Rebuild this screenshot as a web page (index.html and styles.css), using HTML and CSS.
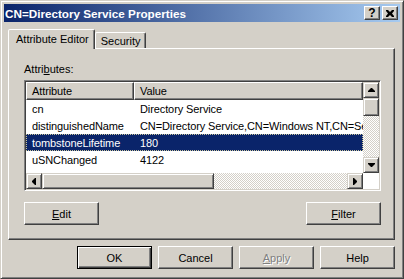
FILE: index.html
```html
<!DOCTYPE html>
<html lang="en">
<head>
    <meta charset="UTF-8">
    <title>CN=Directory Service Properties</title>
    <link rel="stylesheet" href="styles.css">
</head>
<body>
<div class="window">
    <div class="titlebar">
        <span class="title">CN=Directory Service Properties</span>
        <div class="caption-btns">
            <span class="cbtn help">?</span>
            <span class="cbtn close">
                <svg width="8" height="7" viewBox="0 0 8 7"><path d="M0 0h2l2 2 2-2h2v1L6 3.5 8 6v1H6L4 5 2 7H0V6l2-2.5L0 1z" fill="#000"/></svg>
            </span>
        </div>
    </div>

    <div class="dialog">
        <div class="tabs">
            <div class="tab active">Attribute Editor</div>
            <div class="tab">Security</div>
        </div>

        <div class="panel">
            <div class="label">Attri<u>b</u>utes:</div>

            <div class="listbox">
                <div class="list-content">
                    <div class="lv-header">
                        <div class="hcell col-a">Attribute</div>
                        <div class="hcell col-v">Value</div>
                    </div>
                    <div class="row">
                        <div class="cell col-a">cn</div>
                        <div class="cell col-v">Directory Service</div>
                    </div>
                    <div class="row">
                        <div class="cell col-a">distinguishedName</div>
                        <div class="cell col-v">CN=Directory Service,CN=Windows NT,CN=Services,CN=Configuration</div>
                    </div>
                    <div class="row selected">
                        <div class="cell col-a">tombstoneLifetime</div>
                        <div class="cell col-v">180</div>
                    </div>
                    <div class="row">
                        <div class="cell col-a">uSNChanged</div>
                        <div class="cell col-v">4122</div>
                    </div>
                    <div class="row">
                        <div class="cell col-a">uSNCreated</div>
                        <div class="cell col-v">4122</div>
                    </div>
                </div>

                <div class="vscroll">
                    <div class="sbtn">
                        <svg width="7" height="4" viewBox="0 0 7 4"><path d="M3 0h1l3 3v1H0V3z" fill="#000"/></svg>
                    </div>
                    <div class="thumb v"></div>
                    <div class="track"></div>
                    <div class="sbtn">
                        <svg width="7" height="4" viewBox="0 0 7 4"><path d="M0 0h7v1L4 4H3L0 1z" fill="#000"/></svg>
                    </div>
                </div>

                <div class="hscroll">
                    <div class="sbtn">
                        <svg width="4" height="7" viewBox="0 0 4 7"><path d="M0 3v1l3 3h1V0H3z" fill="#000"/></svg>
                    </div>
                    <div class="thumb h"></div>
                    <div class="track"></div>
                    <div class="sbtn">
                        <svg width="4" height="7" viewBox="0 0 4 7"><path d="M0 0v7h1l3-3V3L1 0z" fill="#000"/></svg>
                    </div>
                </div>
                <div class="corner"></div>
            </div>

            <div class="panel-buttons">
                <button class="btn"><u>E</u>dit</button>
                <button class="btn"><u>F</u>ilter</button>
            </div>
        </div>

        <div class="dialog-buttons">
            <button class="btn default">OK</button>
            <button class="btn">Cancel</button>
            <button class="btn disabled"><u>A</u>pply</button>
            <button class="btn">Help</button>
        </div>
    </div>
</div>
</body>
</html>
```

FILE: styles.css
```css
body {
    margin: 0;
    background-color: #d4d0c8;
    font-family: "Liberation Sans", Arial, sans-serif;
    font-size: 11px;
    color: #000;
}

/* window frame */
.window {
    box-sizing: border-box;
    width: 404px;
    height: 279px;
    padding: 3px;
    background-color: #d4d0c8;
    border: 1px solid;
    border-color: #d4d0c8 #404040 #404040 #d4d0c8;
    box-shadow: inset 1px 1px #fff, inset -1px -1px #808080;
}

.titlebar {
    height: 18px;
    display: flex;
    align-items: center;
    justify-content: space-between;
    padding: 0 2px 0 1px;
    background: linear-gradient(to right, #0a246a, #a6caf0);
}
.title {
    color: #fff;
    font-weight: bold;
    font-size: 11.7px;
    white-space: nowrap;
}
.caption-btns {
    display: flex;
    gap: 2px;
}
.cbtn {
    box-sizing: border-box;
    width: 16px;
    height: 14px;
    display: flex;
    align-items: center;
    justify-content: center;
    background-color: #d4d0c8;
    border: 1px solid;
    border-color: #fff #404040 #404040 #fff;
    box-shadow: inset -1px -1px #808080, inset 1px 1px #d4d0c8;
}
.cbtn.help {
    font-weight: bold;
    font-size: 12px;
    line-height: 1;
}

/* dialog body */
.dialog {
    padding: 7px 5px 0 4px;
}

.tabs {
    display: flex;
    align-items: flex-end;
    height: 19px;
}
.tab {
    box-sizing: border-box;
    height: 16px;
    padding: 0 4px 0 5px;
    display: flex;
    align-items: center;
    border: 1px solid;
    border-bottom: none;
    border-color: #fff #404040 transparent #fff;
    border-radius: 2px 2px 0 0;
    box-shadow: inset -1px 0 #808080;
}
.tab.active {
    position: relative;
    z-index: 1;
    height: 20px;
    margin-bottom: -1px;
    padding: 0 5px 2px 7px;
    background-color: #d4d0c8;
}

.panel {
    box-sizing: border-box;
    height: 192px;
    padding: 14px 13px 0 15px;
    border: 1px solid;
    border-color: #fff #404040 #404040 #fff;
    box-shadow: inset -1px -1px #808080;
}
.label {
    line-height: 13px;
}

/* list view */
.listbox {
    box-sizing: border-box;
    height: 111px;
    margin-top: 4px;
    display: grid;
    grid-template-columns: 1fr 16px;
    grid-template-rows: 1fr 16px;
    background-color: #fff;
    border: 1px solid;
    border-color: #808080 #fff #fff #808080;
    box-shadow: inset 1px 1px #404040, inset -1px -1px #d4d0c8;
    padding: 1px;
}
.list-content {
    overflow: hidden;
    white-space: nowrap;
    letter-spacing: -0.1px;
}
.lv-header {
    display: flex;
    height: 18px;
}
.hcell {
    box-sizing: border-box;
    height: 18px;
    padding-left: 5px;
    display: flex;
    align-items: center;
    background-color: #d4d0c8;
    border: 1px solid;
    border-color: #fff #404040 #404040 #fff;
    box-shadow: inset -1px -1px #808080;
}
.hcell.col-v {
    flex: 1;
}
.col-a {
    width: 108px;
    flex-shrink: 0;
}
.row {
    display: flex;
    height: 17px;
    align-items: center;
}
.cell {
    box-sizing: border-box;
    padding-left: 6px;
}
.row.selected {
    background-color: #0a246a;
    color: #fff;
    outline: 1px dotted #c8c49a;
    outline-offset: -1px;
}

/* scroll bars */
.vscroll {
    display: flex;
    flex-direction: column;
}
.hscroll {
    display: flex;
}
.sbtn, .thumb {
    box-sizing: border-box;
    flex-shrink: 0;
    width: 16px;
    height: 16px;
    display: flex;
    align-items: center;
    justify-content: center;
    background-color: #d4d0c8;
    border: 1px solid;
    border-color: #d4d0c8 #404040 #404040 #d4d0c8;
    box-shadow: inset 1px 1px #fff, inset -1px -1px #808080;
}
.thumb.v {
    height: 18px;
}
.thumb.h {
    width: 172px;
}
.track {
    flex: 1;
    background: repeating-conic-gradient(#d4d0c8 0 25%, #fff 0 50%) 0 0 / 2px 2px;
}
.corner {
    background-color: #fff;
}

/* push buttons */
.btn {
    box-sizing: border-box;
    width: 75px;
    height: 23px;
    padding: 0;
    font-family: "Liberation Sans", Arial, sans-serif;
    font-size: 11px;
    color: #000;
    background-color: #d4d0c8;
    border: 1px solid;
    border-color: #fff #404040 #404040 #fff;
    box-shadow: inset -1px -1px #808080, inset 1px 1px #d4d0c8;
    border-radius: 0;
}
.btn.default {
    border-color: #000;
    box-shadow: inset 1px 1px #fff, inset -1px -1px #404040, inset -2px -2px #808080;
}
.btn.disabled {
    color: #808080;
    text-shadow: 1px 1px #fff;
}

.panel-buttons {
    display: flex;
    justify-content: space-between;
    margin-top: 11px;
}
.dialog-buttons {
    display: flex;
    justify-content: flex-end;
    gap: 6px;
    margin-top: 6px;
}
```
